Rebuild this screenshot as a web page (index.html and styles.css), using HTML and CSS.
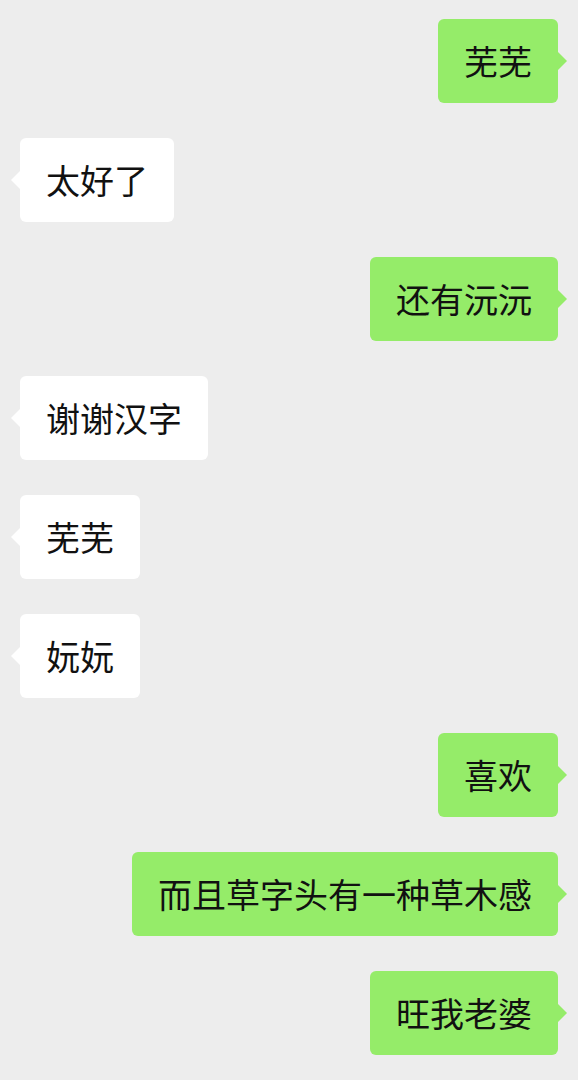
FILE: index.html
```html
<!DOCTYPE html>
<html>
  <head>
    <meta charset="utf-8">
    <title>聊天</title>
    <link rel="stylesheet" href="styles.css">
  </head>
  <body>
    <main class="chat">
      <div class="msg me"><div class="bubble">芜芜</div></div>
      <div class="msg them"><div class="bubble">太好了</div></div>
      <div class="msg me"><div class="bubble">还有沅沅</div></div>
      <div class="msg them"><div class="bubble">谢谢汉字</div></div>
      <div class="msg them"><div class="bubble">芜芜</div></div>
      <div class="msg them"><div class="bubble">妧妧</div></div>
      <div class="msg me"><div class="bubble">喜欢</div></div>
      <div class="msg me"><div class="bubble">而且草字头有一种草木感</div></div>
      <div class="msg me"><div class="bubble">旺我老婆</div></div>
    </main>
  </body>
</html>
```
FILE: styles.css
```css
body {
  margin: 0;
  background-color: #ededed;
  font-family: "Noto Sans CJK SC", "Noto Sans", sans-serif;
}

.chat {
  display: flex;
  flex-direction: column;
  gap: 35px;
  padding: 19px 20px;
}

.msg {
  display: flex;
}

.msg.me {
  justify-content: flex-end;
}

.bubble {
  position: relative;
  height: 84px;
  line-height: 84px;
  padding: 0 26px;
  border-radius: 6px;
  font-size: 34px;
  color: #111;
  background-color: #fff;
}

.me .bubble {
  background-color: #95ec69;
}

/* little tail pointing at the avatar side */
.bubble::after {
  content: "";
  position: absolute;
  top: 32px;
  border: 10px solid transparent;
}

.them .bubble::after {
  left: -19px;
  border-right-color: #fff;
}

.me .bubble::after {
  right: -19px;
  border-left-color: #95ec69;
}
```
